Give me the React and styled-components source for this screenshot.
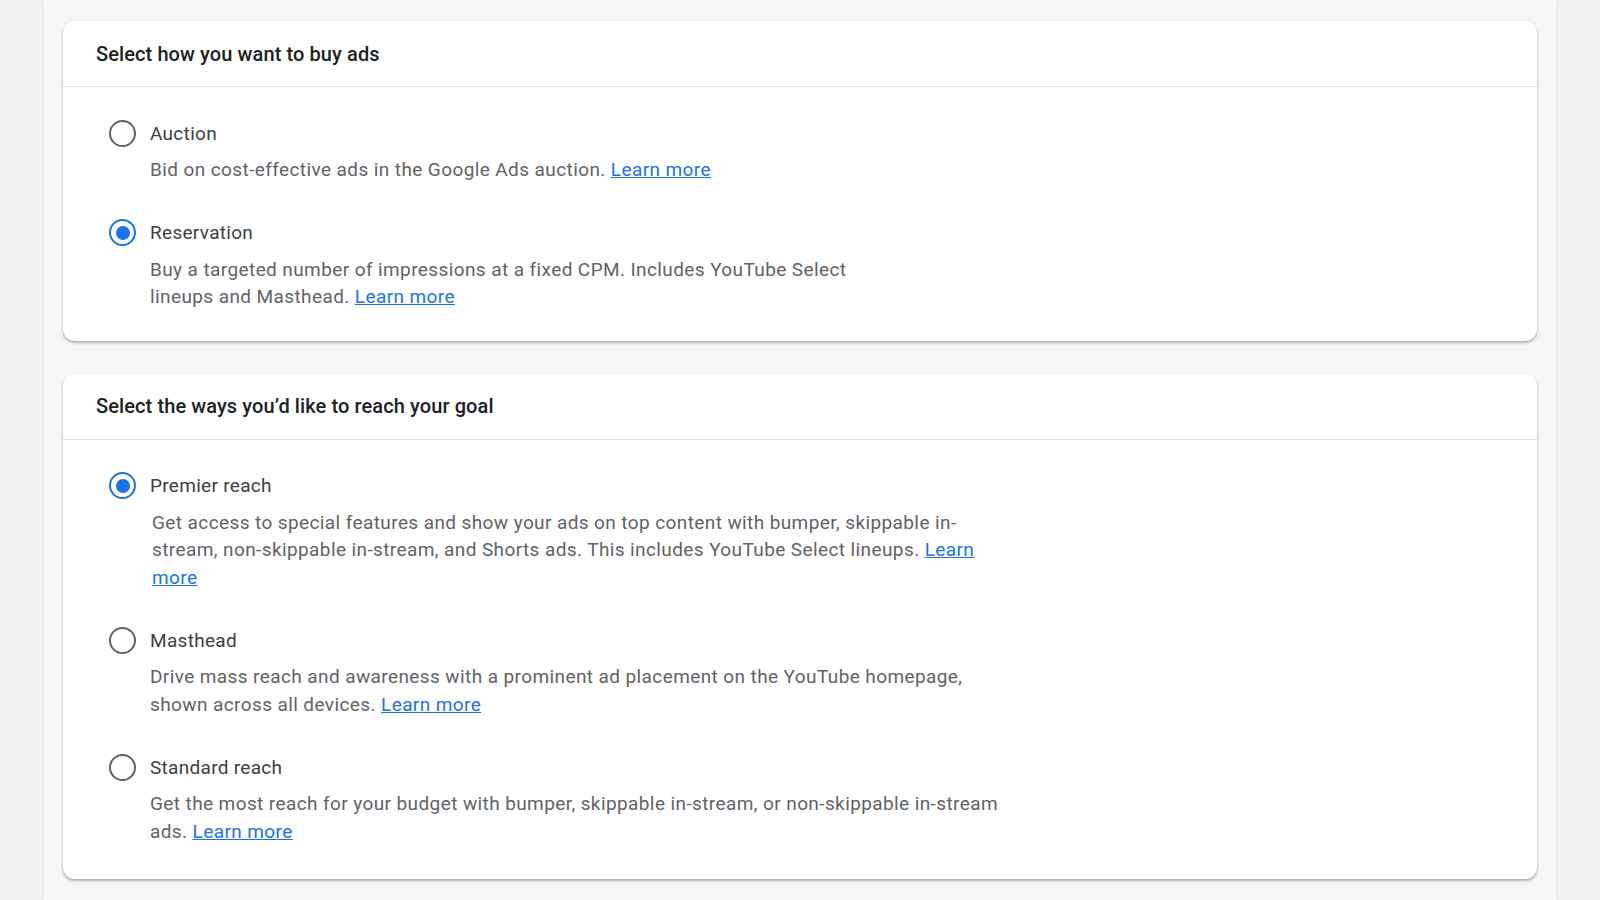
import React from 'react';
import styled, { createGlobalStyle } from 'styled-components';

const Global = createGlobalStyle`
body { margin: 0; background: #f1f1f1; font-family: Roboto, "Noto Sans", sans-serif; }
`

const Page = styled.div`
width: 1512px;
margin-left: 44px;
min-height: 900px;
background: #f6f6f6;
box-shadow: 0 0 6px rgba(0,0,0,0.06);
padding: 21px 19px 0;
box-sizing: border-box;
display: flex;
flex-direction: column;
gap: 33px;
`

const Card = styled.section`
background: #fff;
border-radius: 12px;
box-shadow: 0 2px 3px rgba(0,0,0,0.28), 0 0 2px rgba(0,0,0,0.08);
`

const Header = styled.h2`
margin: 0;
padding: 0 33px;
height: 65px;
display: flex;
align-items: center;
font-size: 20px;
font-weight: 500;
letter-spacing: 0.1px;
color: #202124;
border-bottom: 1px solid #e0e0e0;
`

const Body = styled.div`
padding: 29px 46px ${p => p.$bottom}px;
display: flex;
flex-direction: column;
`

const Option = styled.div`
margin-bottom: ${p => p.$gap}px;
&:last-child { margin-bottom: 0; }
`

const Row = styled.label`
display: flex;
align-items: center;
gap: 14px;
height: 34px;
font-size: 19px;
letter-spacing: 0.3px;
color: #3c4043;
`

const Radio = styled.span`
width: 27px;
height: 27px;
box-sizing: border-box;
border-radius: 50%;
border: 2.5px solid ${p => p.$on ? '#1a73e8' : '#5f6368'};
display: flex;
align-items: center;
justify-content: center;
&::after {
  content: '';
  width: 14px;
  height: 14px;
  border-radius: 50%;
  background: ${p => p.$on ? '#1a73e8' : 'transparent'};
}
`

const Desc = styled.p`
margin: 6px 0 0 ${p => p.$indent || 41}px;
max-width: ${p => p.$w}px;
font-size: 19px;
letter-spacing: 0.4px;
line-height: 27.5px;
color: #5f6368;
`

const Link = styled.a`
color: #1a73e8;
text-decoration: underline;
`

const Item = ({ label, on, children, w = 850, gap = 32, indent }) => (
  <Option $gap={gap}>
    <Row><Radio $on={on} />{label}</Row>
    <Desc $w={w} $indent={indent}>{children} <Link>Learn more</Link></Desc>
  </Option>
)

export default function App() {
  return (
    <Page>
      <Global />
      <Card>
        <Header>Select how you want to buy ads</Header>
        <Body $bottom={30}>
          <Item label="Auction" w={900}>Bid on cost-effective ads in the Google Ads auction.</Item>
          <Item label="Reservation" on w={720}>Buy a targeted number of impressions at a fixed CPM. Includes YouTube Select lineups and Masthead.</Item>
        </Body>
      </Card>
      <Card>
        <Header>Select the ways you’d like to reach your goal</Header>
        <Body $bottom={34}>
          <Item label="Premier reach" on indent={43}>Get access to special features and show your ads on top content with bumper, skippable in-stream, non-skippable in-stream, and Shorts ads. This includes YouTube Select lineups.</Item>
          <Item label="Masthead">Drive mass reach and awareness with a prominent ad placement on the YouTube homepage, shown across all devices.</Item>
          <Item label="Standard reach">Get the most reach for your budget with bumper, skippable in-stream, or non-skippable in-stream ads.</Item>
        </Body>
      </Card>
    </Page>
  )
}
